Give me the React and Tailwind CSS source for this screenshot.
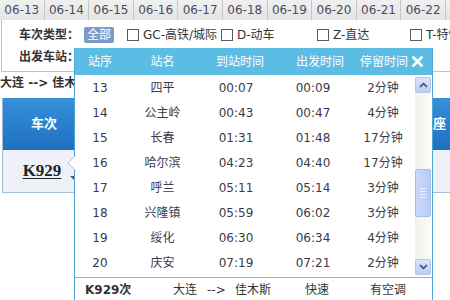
import React from 'react';

const dates = ['06-13', '06-14', '06-15', '06-16', '06-17', '06-18', '06-19', '06-20', '06-21', '06-22', '06-23'];

const stops = [
    { no: 13, name: '四平', arrive: '00:07', depart: '00:09', stay: '2分钟' },
    { no: 14, name: '公主岭', arrive: '00:43', depart: '00:47', stay: '4分钟' },
    { no: 15, name: '长春', arrive: '01:31', depart: '01:48', stay: '17分钟' },
    { no: 16, name: '哈尔滨', arrive: '04:23', depart: '04:40', stay: '17分钟' },
    { no: 17, name: '呼兰', arrive: '05:11', depart: '05:14', stay: '3分钟' },
    { no: 18, name: '兴隆镇', arrive: '05:59', depart: '06:02', stay: '3分钟' },
    { no: 19, name: '绥化', arrive: '06:30', depart: '06:34', stay: '4分钟' },
    { no: 20, name: '庆安', arrive: '07:19', depart: '07:21', stay: '2分钟' },
];

const trainTypes = [
    { label: 'GC-高铁/城际', w: 'w-[94px]' },
    { label: 'D-动车', w: 'w-[96px]' },
    { label: 'Z-直达', w: 'w-[93px]' },
    { label: 'T-特快', w: 'w-[60px]' },
];

function Checkbox() {
    return <span className="inline-block h-[12px] w-[12px] shrink-0 border border-[#5a5a5a] bg-white" />;
}

function Scrollbar() {
    return (
        <div className="mr-[1px] mt-[2px] flex w-[16px] shrink-0 flex-col bg-gradient-to-r from-[#f1f1ec] to-[#fbfbf8]">
            {/* up arrow */}
            <div className="flex h-[16px] items-center justify-center rounded-[2px] border border-[#b3c6f1] bg-gradient-to-b from-[#dbe5fb] to-[#bccdf4]">
                <svg width="9" height="6" viewBox="0 0 9 6">
                    <path d="M1 5 L4.5 1.5 L8 5" fill="none" stroke="#4d6185" strokeWidth="1.8" />
                </svg>
            </div>
            <div className="h-[76px]" />
            {/* thumb */}
            <div className="flex h-[48px] items-center justify-center rounded-[2px] border border-[#a6bbee] bg-gradient-to-r from-[#cbd9fa] to-[#b9cbf5]">
                <div className="flex flex-col gap-[2px]">
                    <span className="block h-[1px] w-[6px] bg-[#eef2fd]" />
                    <span className="block h-[1px] w-[6px] bg-[#eef2fd]" />
                    <span className="block h-[1px] w-[6px] bg-[#eef2fd]" />
                    <span className="block h-[1px] w-[6px] bg-[#eef2fd]" />
                </div>
            </div>
            <div className="flex-1" />
            {/* down arrow */}
            <div className="flex h-[16px] items-center justify-center rounded-[2px] border border-[#b3c6f1] bg-gradient-to-b from-[#dbe5fb] to-[#bccdf4]">
                <svg width="9" height="6" viewBox="0 0 9 6">
                    <path d="M1 1 L4.5 4.5 L8 1" fill="none" stroke="#4d6185" strokeWidth="1.8" />
                </svg>
            </div>
        </div>
    );
}

function StopsPopup() {
    return (
        <div className="absolute left-[74px] top-[48px] w-[359px] border-x border-[#4ea8d2] bg-white">
            {/* left-pointing arrow */}
            <svg className="absolute left-[-8px] top-[107px]" width="9" height="16" viewBox="0 0 9 16">
                <path d="M8.5 0.5 L1 8 L8.5 15.5" fill="#fff" stroke="#a8c4dc" strokeWidth="1" />
            </svg>

            {/* header */}
            <div className="flex h-[27px] items-center bg-[#5bbde4] text-[12px] text-white">
                <div className="w-[50px] text-center">站序</div>
                <div className="w-[75px] text-center">站名</div>
                <div className="w-[80px] text-center">到站时间</div>
                <div className="w-[80px] text-center">出发时间</div>
                <div className="w-[42px] whitespace-nowrap text-center">停留时间</div>
                <div className="flex flex-1 items-center justify-center">
                    <svg width="11" height="11" viewBox="0 0 11 11">
                        <path d="M1.5 1.5 L9.5 9.5 M9.5 1.5 L1.5 9.5" stroke="#fff" strokeWidth="2.8" strokeLinecap="round" />
                    </svg>
                </div>
            </div>

            {/* rows + scrollbar */}
            <div className="flex h-[200px]">
                <div className="flex-1 text-[12px] text-[#3b3a48]">
                    {stops.map((s) => (
                        <div key={s.no} className="flex h-[25px] items-center">
                            <div className="w-[50px] text-center">{s.no}</div>
                            <div className="w-[75px] text-center">{s.name}</div>
                            <div className="w-[72px] text-center">{s.arrive}</div>
                            <div className="w-[82px] text-center">{s.depart}</div>
                            <div className="w-[58px] text-center">{s.stay}</div>
                        </div>
                    ))}
                </div>
                <Scrollbar />
            </div>

            {/* footer */}
            <div className="mt-[2px] flex h-[24px] items-center border-t border-[#8fb3c9] text-[12px] text-[#333]">
                <span className="w-[98px] pl-[10px] font-bold">K929次</span>
                <span className="w-[34px]">大连</span>
                <span className="w-[28px]">--&gt;</span>
                <span className="w-[70px]">佳木斯</span>
                <span className="w-[65px]">快速</span>
                <span>有空调</span>
            </div>
        </div>
    );
}

export default function App() {
    return (
        <div className="relative h-[300px] w-[450px] overflow-hidden bg-white font-['DejaVu_Sans','Noto_Sans_CJK_SC',sans-serif] text-[12px] text-[#333]">
            {/* date tabs */}
            <div className="flex h-[20px] bg-[#ececec]">
                {dates.map((d) => (
                    <div
                        key={d}
                        className="flex h-[20px] w-[44.6px] shrink-0 items-start justify-center border-r border-[#c6c6c6] bg-gradient-to-b from-[#f0f0f0] to-[#e4e4e4] pt-[1px] text-[12px] text-[#4b4b5e]"
                    >
                        {d}
                    </div>
                ))}
            </div>

            {/* filter panel */}
            <div className="ml-[1px] flex h-[52px] flex-col border-b border-l border-[#b3c5d6] pl-[17px]">
                <div className="mt-[7px] flex h-[16px] items-center">
                    <span className="w-[65px] shrink-0 whitespace-nowrap font-bold">车次类型：</span>
                    <span className="flex h-[16px] w-[30px] shrink-0 items-center justify-center whitespace-nowrap rounded-[2px] bg-[#7d9acb] text-white">全部</span>
                    <span className="w-[13px] shrink-0" />
                    {trainTypes.map((t) => (
                        <label key={t.label} className={`flex shrink-0 items-center gap-[4px] whitespace-nowrap ${t.w}`}>
                            <Checkbox />
                            <span className="text-[#333]">{t.label}</span>
                        </label>
                    ))}
                </div>
                <div className="mt-[6px] flex h-[16px] items-center font-bold">出发车站：</div>
            </div>

            {/* route */}
            <div className="h-[26px] pt-[3px] font-bold leading-[16px]">大连 --&gt; 佳木斯</div>

            {/* result table */}
            <div className="ml-[2px] border-l border-[#9fb9d3]">
                <div className="flex h-[52px] bg-gradient-to-b from-[#3690da] to-[#1e70c1] font-bold text-white">
                    <div className="flex w-[72px] items-center justify-center pl-[10px] text-[13px]">车次</div>
                    <div className="flex-1" />
                    <div className="flex w-[34px] items-center justify-center text-[13px]">硬座</div>
                </div>
                <div className="relative flex h-[43px] border-b border-[#a9bfd5] bg-[#eef2f8]">
                    <div className="flex w-[72px] items-center justify-center pl-[6px]">
                        <span className="font-['Liberation_Serif',serif] text-[17px] font-bold text-[#222] underline underline-offset-2">K929</span>
                    </div>
                    <svg className="absolute left-[67px] top-[26px]" width="5" height="5" viewBox="0 0 5 5">
                        <path d="M0 0 L5 0 L5 5 Z" fill="#2a5f96" />
                    </svg>
                </div>
            </div>

            <StopsPopup />
        </div>
    );
}
